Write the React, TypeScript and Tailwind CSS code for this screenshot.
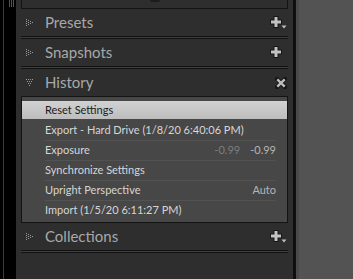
import React from "react";

const font = { fontFamily: "Lato, 'Open Sans', sans-serif" };

function Tri({ open }: { open?: boolean }) {
  // dotted disclosure triangle
  const dots: [number, number][] = [];
  if (open) {
    for (let r = 0; r < 4; r++) {
      for (let c = 0; c < 4 - r; c++) dots.push([r + c * 2, r * 2]);
    }
  } else {
    for (let c = 0; c < 4; c++) {
      for (let r = 0; r < 4 - c; r++) dots.push([c * 2, c + r * 2]);
    }
  }
  return (
    <svg width="8" height="8" viewBox="0 0 8 8" className="shrink-0">
      {dots.map(([x, y], i) => (
        <rect key={i} x={x} y={y} width="1" height="1" fill="#9a9a9a" />
      ))}
    </svg>
  );
}

function Plus({ menu }: { menu?: boolean }) {
  return (
    <svg width="17" height="14" viewBox="0 0 17 14">
      <path d="M3.5 0h5v3.5H12v5H8.5V12h-5V8.5H0v-5h3.5z" fill="#161616" />
      <path d="M4.5 1h3v3.5H11v3H7.5V11h-3V7.5H1v-3h3.5z" fill="#c2c2c2" />
      {menu && <path d="M11.5 9.5h5l-2.5 3z" fill="#bdbdbd" />}
    </svg>
  );
}

function Close() {
  return (
    <svg width="12" height="12" viewBox="0 0 12 12">
      <path d="M2 2l8 8M10 2l-8 8" stroke="#161616" strokeWidth="4.4" strokeLinecap="square" />
      <path d="M2.3 2.3l7.4 7.4M9.7 2.3l-7.4 7.4" stroke="#bcbcbc" strokeWidth="2.4" strokeLinecap="butt" />
    </svg>
  );
}

function Header({ title, open, icon }: { title: string; open?: boolean; icon: React.ReactNode }) {
  return (
    <div className="flex items-center h-[27px] pl-[5px] pr-[6px]">
      <div className="w-[24px] pl-[5px] flex items-center">
        <Tri open={open} />
      </div>
      <span className="text-[15px] text-[#a8a8a8] leading-none" style={font}>
        {title}
      </span>
      <div className="ml-auto flex items-center">{icon}</div>
    </div>
  );
}

function Sep() {
  return <div className="mx-[5px] h-[3px] bg-[#3e3e3e] border-y border-[#121212]" />;
}

const rows = [
  { label: "Reset Settings" },
  { label: "Export - Hard Drive (1/8/20 6:40:06 PM)" },
  { label: "Exposure", a: "-0.99", b: "-0.99" },
  { label: "Synchronize Settings" },
  { label: "Upright Perspective", b: "Auto" },
  { label: "Import (1/5/20 6:11:27 PM)" },
];

export default function App() {
  return (
    <div className="w-[353px] h-[279px] flex bg-[#535353] overflow-hidden" style={font}>
      <div className="w-[16px] h-full bg-black flex">
        <div className="w-[3px]" />
        <div className="w-px bg-[#3a3a3a]" />
        <div className="w-[5px]" />
        <div className="h-[7px] flex gap-px">
          <div className="w-px bg-[#555]" />
          <div className="w-px bg-[#555]" />
          <div className="w-px bg-[#555]" />
        </div>
      </div>
      <div className="w-[277px] h-full bg-[#2e2e2e] flex flex-col">
        <div className="mx-[5px] h-[9px] border-x border-b border-[#141414] flex justify-center">
          <div className="w-[10px] h-[2px] rounded-b-full bg-[#1c1c1c]" />
        </div>
        <Header title="Presets" icon={<Plus menu />} />
        <Sep />
        <Header title="Snapshots" icon={<Plus />} />
        <Sep />
        <Header title="History" open icon={<Close />} />
        <div className="mx-[5px] border border-[#141414] bg-[#474747] pt-[4px] pb-[2px]">
          {rows.map((r, i) => (
            <div
              key={i}
              className={
                i === 0
                  ? "h-[18px] flex items-center pl-[23px] pr-[11px] bg-gradient-to-b from-[#d2d2d2] to-[#bdbdbd] text-[#1b1b1b] mb-px"
                  : "h-[20px] flex items-center pl-[23px] pr-[11px] text-[#d6d6d6]"
              }
            >
              <div
                className={
                  "flex-1 h-full flex items-center text-[11px] " +
                  (i > 1 && i < 6 ? "border-t border-[#525252] " : "")
                }
              >
                <span>{r.label}</span>
                <span className="ml-auto text-[#7d7d7d]">{r.a}</span>
                {r.b && <span className="ml-[10px] text-[#b5b5b5]">{r.b}</span>}
              </div>
            </div>
          ))}
        </div>
        <Header title="Collections" icon={<Plus menu />} />
        <Sep />
      </div>
      <div className="w-[3px] h-full bg-[#0e0e0e]" />
      <div className="w-[3px] h-full bg-[#4a4a4a]" />
    </div>
  );
}
